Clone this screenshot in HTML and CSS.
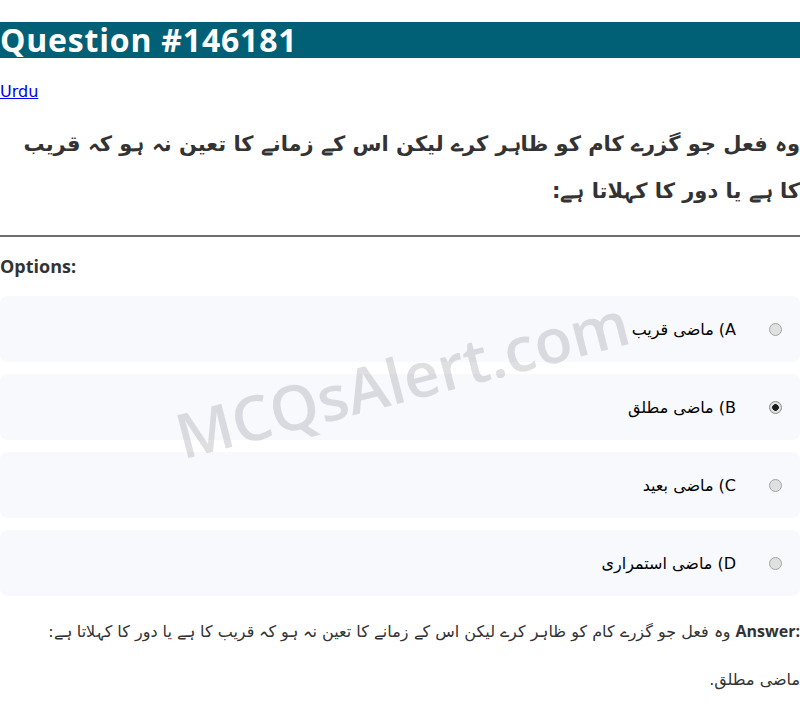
FILE: index.html
```html
<!DOCTYPE html>
<html lang="en">
<head>
<meta charset="utf-8">
<title>Question #146181</title>
<link rel="stylesheet" href="styles.css">
</head>
<body>
<div class="page">
  <h1 class="title">Question #146181</h1>
  <a class="lang" href="#">Urdu</a>
  <p class="question" dir="rtl">وہ فعل جو گزرے کام کو ظاہر کرے لیکن اس کے زمانے کا تعین نہ ہو کہ قریب کا ہے یا دور کا کہلاتا ہے:</p>
  <hr class="rule">
  <div class="options-label">Options:</div>
  <div class="options">
    <label class="option" dir="rtl"><input type="radio" name="q" disabled><span class="opt-text">A) ماضی قریب</span></label>
    <label class="option" dir="rtl"><input type="radio" name="q" checked disabled><span class="opt-text">B) ماضی مطلق</span></label>
    <label class="option" dir="rtl"><input type="radio" name="q" disabled><span class="opt-text">C) ماضی بعید</span></label>
    <label class="option" dir="rtl"><input type="radio" name="q" disabled><span class="opt-text">D) ماضی استمراری</span></label>
  </div>
  <p class="answer" dir="rtl"><b dir="ltr">Answer:</b> وہ فعل جو گزرے کام کو ظاہر کرے لیکن اس کے زمانے کا تعین نہ ہو کہ قریب کا ہے یا دور کا کہلاتا ہے: ماضی&nbsp;مطلق.</p>
  <div class="watermark">MCQsAlert.com</div>
</div>
</body>
</html>
```
FILE: styles.css
```css
html, body {
  margin: 0;
  padding: 0;
  background: #fff;
}
body {
  font-family: "DejaVu Sans", sans-serif;
  color: #333;
}
.page {
  position: relative;
  width: 800px;
}
.title {
  margin: 22px 0 0;
  background: #016075;
  color: #fff;
  font-family: "Open Sans", "DejaVu Sans", sans-serif;
  font-size: 32px;
  line-height: 36px;
  font-weight: 700;
  letter-spacing: 0.8px;
}
.lang {
  display: block;
  margin-top: 24px;
  font-size: 16px;
  line-height: 19px;
  color: #0000ee;
  width: max-content;
}
.question {
  margin: 20px 0 0;
  font-size: 21px;
  font-weight: bold;
  line-height: 47px;
  text-align: right;
  color: #333;
}
.rule {
  margin: 20px 0 0;
  border: 0;
  height: 2px;
  background: #6e6e6e;
}
.options-label {
  margin-top: 18px;
  font-family: "Open Sans", "DejaVu Sans", sans-serif;
  font-size: 18px;
  line-height: 22px;
  font-weight: 700;
  color: #333;
}
.options {
  margin-top: 19px;
  display: flex;
  flex-direction: column;
  gap: 12px;
}
.option {
  display: flex;
  align-items: center;
  gap: 33px;
  height: 66px;
  padding: 0 18px;
  background: #f8f9fd;
  border-radius: 8px;
  color: #000;
  font-size: 16px;
}
.option input {
  appearance: none;
  -webkit-appearance: none;
  margin: 0;
  width: 13px;
  height: 13px;
  border-radius: 50%;
  border: 1px solid #a3a3a3;
  background: #e0e0e0;
  box-sizing: border-box;
}
.option input:checked {
  background: radial-gradient(circle, #1a1a1a 0 3px, #e0e0e0 3.6px);
  border-color: #8a8a8a;
}
.answer {
  margin: 11px 0 0;
  font-size: 16px;
  line-height: 48px;
  text-align: right;
  color: #333;
}
.answer b {
  font-family: "Open Sans", "DejaVu Sans", sans-serif;
  font-weight: 700;
  color: #333;
}
.watermark {
  position: absolute;
  left: 402px;
  top: 356px;
  transform: translate(-50%, -50%) rotate(-14.5deg);
  font-family: "Open Sans", "DejaVu Sans", sans-serif;
  font-size: 62px;
  font-weight: 600;
  color: rgba(120, 120, 130, 0.24);
  white-space: nowrap;
  pointer-events: none;
}
```
